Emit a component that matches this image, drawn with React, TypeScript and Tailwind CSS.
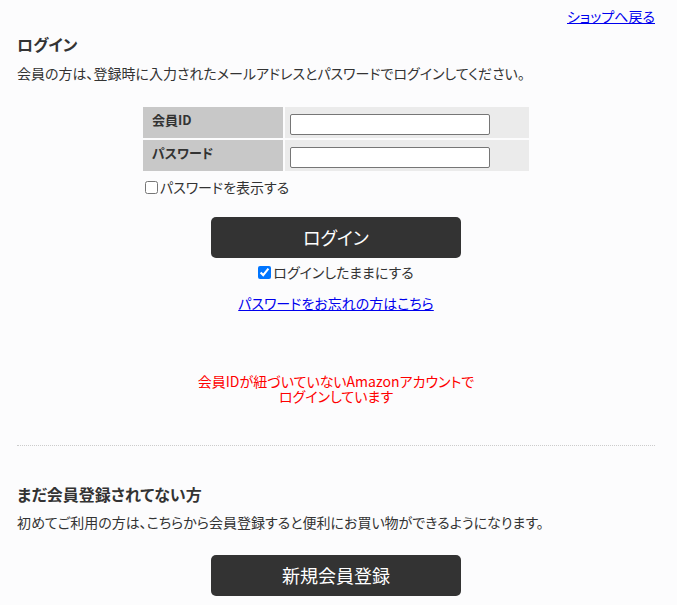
import { useState } from 'react';

export default function App() {
  const [showPassword, setShowPassword] = useState(false);
  const [keepLogin, setKeepLogin] = useState(true);

  return (
    <div className="min-h-[605px] bg-[#fcfcfd] pl-[17px] pr-[22px] text-[#333] font-['Noto_Sans_CJK_JP','Noto_Sans',sans-serif] [font-feature-settings:'palt']">
      {/* Back to shop */}
      <div className="flex justify-end pt-[6px]">
        <a href="#" className="text-[14px] leading-[20px] text-[#0000ee] underline">
          ショップへ戻る
        </a>
      </div>

      {/* Login */}
      <h2 className="mt-[8px] text-[16px] font-bold leading-[20px]">ログイン</h2>
      <p className="mt-[9px] text-[14px] leading-[20px]">
        会員の方は、登録時に入力されたメールアドレスとパスワードでログインしてください。
      </p>

      <div className="mx-auto mt-[24px] w-[386px]">
        <div className="grid grid-cols-[140px_1fr] gap-[2px]">
          <div className="h-[31px] bg-[#c8c8c8] pl-[9px] pt-[4px] text-[13px] font-bold leading-[18px]">会員ID</div>
          <div className="h-[31px] bg-[#ebebeb] pl-[5px] pt-[5px]">
            <input type="text" className="h-[21px] w-[200px] rounded-[2px] border border-[#767676] bg-white" />
          </div>
          <div className="h-[31px] bg-[#c8c8c8] pl-[9px] pt-[4px] text-[13px] font-bold leading-[18px]">パスワード</div>
          <div className="h-[31px] bg-[#ebebeb] pl-[5px] pt-[5px]">
            <input
              type={showPassword ? 'text' : 'password'}
              className="h-[21px] w-[200px] rounded-[2px] border border-[#767676] bg-white"
            />
          </div>
        </div>
        <label className="mt-[6px] flex items-center gap-[2px] pl-[2px] text-[14px] leading-[20px]">
          <input
            type="checkbox"
            checked={showPassword}
            onChange={(e) => setShowPassword(e.target.checked)}
            className="m-0 h-[13px] w-[13px]"
          />
          パスワードを表示する
        </label>
      </div>

      <div className="mt-[20px] flex flex-col items-center">
        <button className="h-[41px] w-[250px] rounded-[5px] bg-[#333] text-[18px] text-white">ログイン</button>
        <label className="mt-[4px] flex items-center gap-[2px] text-[14px] leading-[20px]">
          <input
            type="checkbox"
            checked={keepLogin}
            onChange={(e) => setKeepLogin(e.target.checked)}
            className="m-0 h-[13px] w-[13px]"
          />
          ログインしたままにする
        </label>
        <a href="#" className="mt-[11px] text-[14px] leading-[20px] text-[#0000ee] underline">
          パスワードをお忘れの方はこちら
        </a>
        <p className="mt-[61px] text-center text-[14px] leading-[15px] text-[#ff0000]">
          会員IDが紐づいていないAmazonアカウントで
          <br />
          ログインしています
        </p>
      </div>

      <hr className="mt-[41px] border-0 border-t border-dotted border-[#cccccc]" />

      {/* Register */}
      <h2 className="mt-[38px] text-[16px] font-bold leading-[20px]">まだ会員登録されてない方</h2>
      <p className="mt-[8px] text-[14px] leading-[20px]">
        初めてご利用の方は、こちらから会員登録すると便利にお買い物ができるようになります。
      </p>
      <div className="mt-[23px] flex justify-center">
        <button className="h-[41px] w-[250px] rounded-[5px] bg-[#333] text-[18px] text-white">新規会員登録</button>
      </div>
    </div>
  );
}
